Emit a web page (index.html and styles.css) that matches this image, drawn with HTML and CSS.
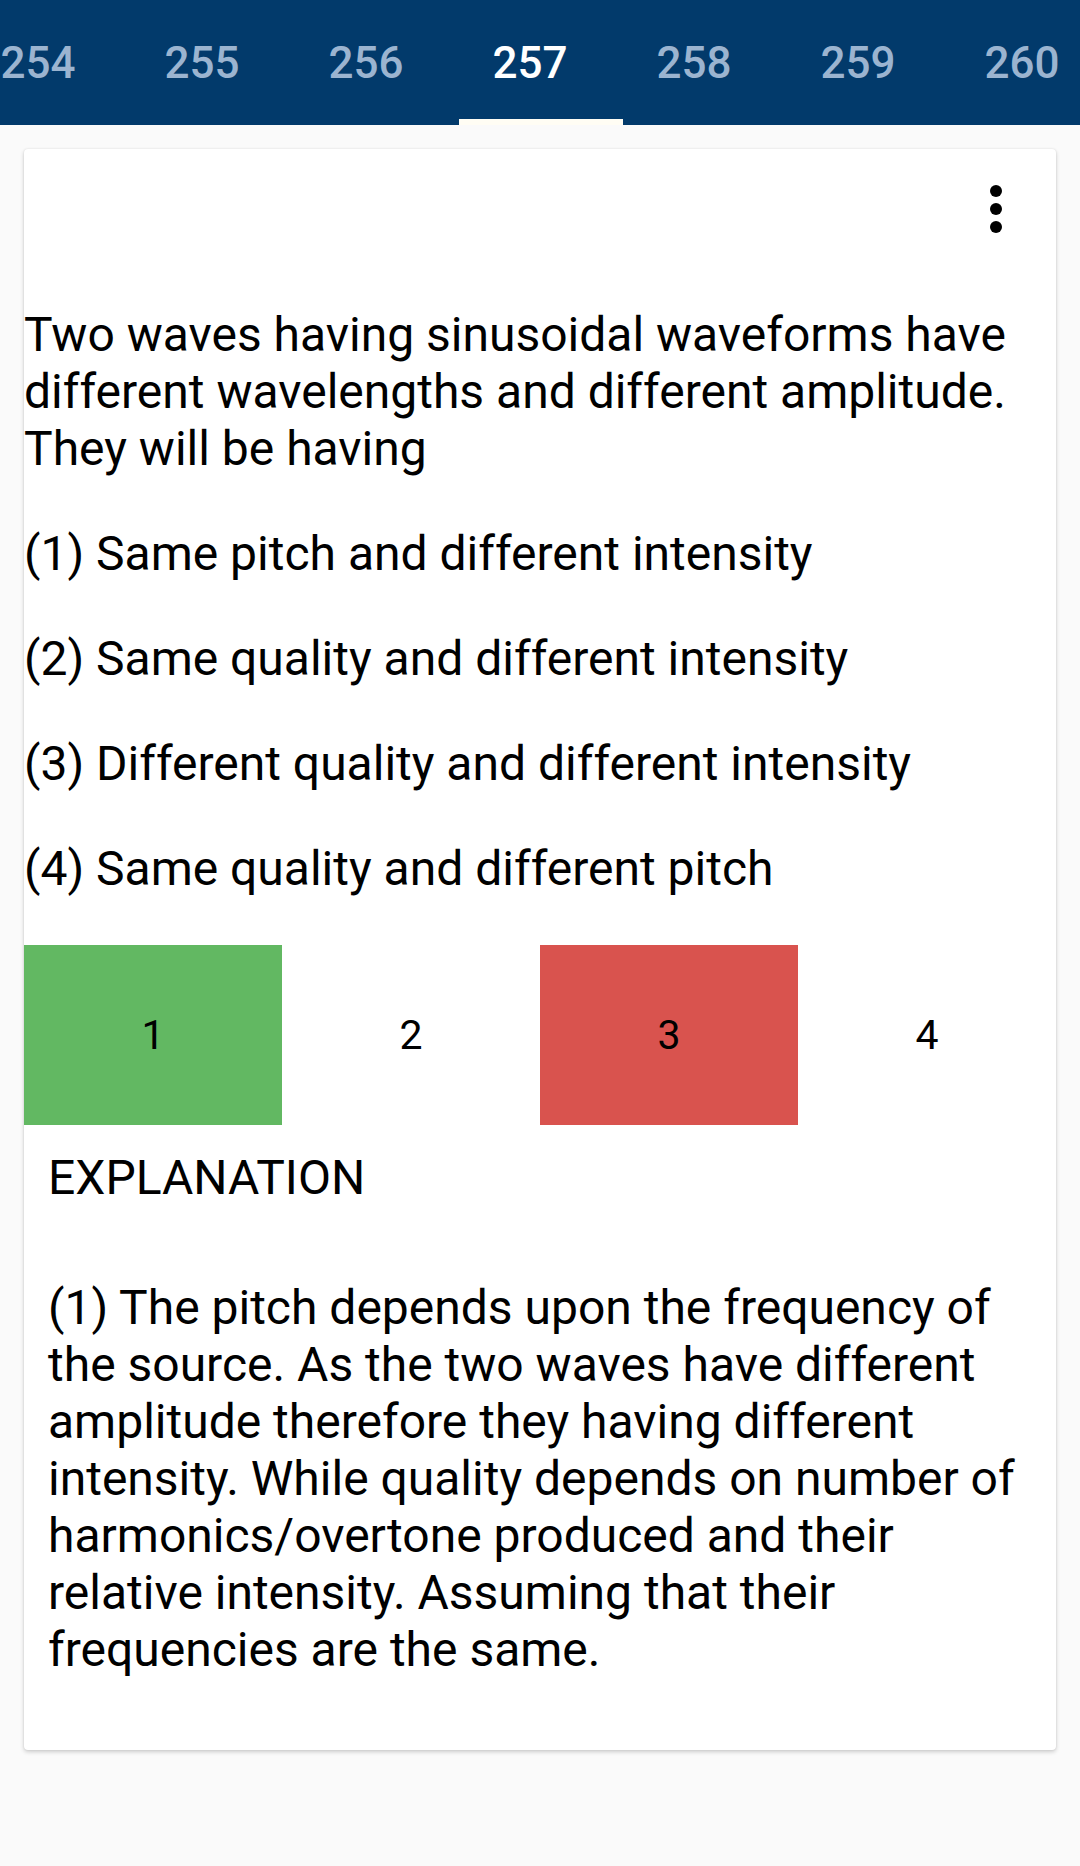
FILE: index.html
```html
<!DOCTYPE html>
<html>
<head>
<meta charset="utf-8">
<link rel="stylesheet" href="styles.css">
</head>
<body>
<header class="tabbar">
  <div class="tabs">
    <div class="tab">254</div>
    <div class="tab">255</div>
    <div class="tab">256</div>
    <div class="tab active">257</div>
    <div class="tab">258</div>
    <div class="tab">259</div>
    <div class="tab">260</div>
  </div>
</header>
<main class="page">
  <section class="card">
    <div class="card-top">
      <button class="menu" aria-label="More options">
        <svg width="72" height="72" viewBox="0 0 72 72"><circle cx="36" cy="18" r="6"/><circle cx="36" cy="36" r="6"/><circle cx="36" cy="54" r="6"/></svg>
      </button>
    </div>
    <p class="question">Two waves having sinusoidal waveforms have different wavelengths and different amplitude. They will be having</p>
    <p class="option">(1) Same pitch and different intensity</p>
    <p class="option">(2) Same quality and different intensity</p>
    <p class="option">(3) Different quality and different intensity</p>
    <p class="option">(4) Same quality and different pitch</p>
    <div class="answers">
      <div class="answer correct">1</div>
      <div class="answer">2</div>
      <div class="answer wrong">3</div>
      <div class="answer">4</div>
    </div>
    <div class="explanation">
      <h2 class="exp-title">EXPLANATION</h2>
      <p class="exp-text">(1) The pitch depends upon the frequency of the source. As the two waves have different amplitude therefore they having different intensity. While quality depends on number of harmonics/overtone produced and their relative intensity. Assuming that their frequencies are the same.</p>
    </div>
  </section>
</main>
</body>
</html>
```
FILE: styles.css
```css
* { box-sizing: border-box; }
html, body { margin: 0; padding: 0; }
body {
  background: #fafafa;
  font-family: Roboto, "Noto Sans", sans-serif;
  color: #000;
  width: 1080px;
  min-height: 1866px;
}
.tabbar {
  height: 125px;
  background: #023a6b;
  overflow: hidden;
}
.tabs {
  display: flex;
  height: 125px;
  margin-left: -33px;
}
.tab {
  flex: 0 0 164px;
  display: flex;
  align-items: center;
  justify-content: center;
  padding-right: 22px;
  font-size: 44px;
  font-weight: 500;
  color: #9bb4d0;
  height: 125px;
}
.tab.active {
  color: #ffffff;
  position: relative;
}
.tab.active::after {
  content: "";
  position: absolute;
  left: 0;
  right: 0;
  bottom: 0;
  height: 6px;
  background: #fffdf4;
}
.page {
  padding: 24px 24px 0;
}
.card {
  background: #fff;
  border-radius: 4px;
  box-shadow: 0 2px 4px rgba(0,0,0,0.18), 0 0 2px rgba(0,0,0,0.1);
  padding-bottom: 72px;
}
.card-top {
  height: 120px;
  display: flex;
  justify-content: flex-end;
  align-items: center;
  padding-right: 24px;
}
.menu {
  width: 72px;
  height: 72px;
  padding: 0;
  border: 0;
  background: none;
  display: block;
}
.menu svg { display: block; fill: #000; }
.question, .option {
  margin: 48px 0 0;
  font-size: 48px;
  line-height: 57px;
  padding-right: 24px;
}
.question { margin-top: 37px; }
.answers {
  display: grid;
  grid-template-columns: repeat(4, 1fr);
  height: 180px;
  margin-top: 48px;
}
.answer {
  display: flex;
  align-items: center;
  justify-content: center;
  font-size: 41px;
  color: #000;
}
.answer.correct { background: #62b862; }
.answer.wrong { background: #d9534e; }
.explanation {
  padding: 0 24px;
}
.exp-title {
  margin: 24px 0 0;
  font-size: 48px;
  font-weight: 400;
  line-height: 57px;
}
.exp-text {
  margin: 73px 0 0;
  font-size: 48px;
  line-height: 57px;
}
```
